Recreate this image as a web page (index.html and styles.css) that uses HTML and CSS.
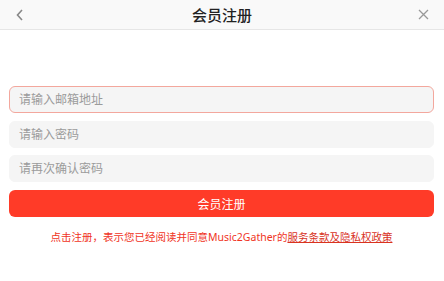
FILE: index.html
```html
<!DOCTYPE html>
<html lang="zh-CN">
<head>
    <meta charset="UTF-8">
    <meta name="viewport" content="width=device-width, initial-scale=1.0">
    <title>会员注册</title>
    <link rel="stylesheet" href="styles.css">
</head>
<body>
    <div class="header">
        <span class="back">
            <svg width="8" height="12" viewBox="0 0 8 12"><path d="M6 1L1.5 6 6 11" fill="none" stroke="#888" stroke-width="1.6"/></svg>
        </span>
        <h1>会员注册</h1>
        <span class="close">
            <svg width="11" height="11" viewBox="0 0 11 11"><path d="M1 1L10 10M10 1L1 10" fill="none" stroke="#999" stroke-width="1.3"/></svg>
        </span>
    </div>
    <div class="form">
        <input class="inp active" type="text" placeholder="请输入邮箱地址">
        <input class="inp" type="password" placeholder="请输入密码">
        <input class="inp" type="password" placeholder="请再次确认密码">
        <button class="btn">会员注册</button>
        <p class="agree">点击注册，表示您已经阅读并同意Music2Gather的<a href="#">服务条款及隐私权政策</a></p>
    </div>
</body>
</html>
```

FILE: styles.css
```css
html,
body,
h1,
p {
    margin: 0;
    padding: 0;
}
body {
    background-color: #fff;
    font-family: "Noto Sans", "Noto Sans CJK SC", sans-serif;
}
.header {
    height: 29px;
    border-bottom: 1px solid #e6e6e6;
    background-color: #f9f9f9;
    display: flex;
    align-items: center;
    justify-content: space-between;
    padding: 0 14px 0 14px;
}
.header h1 {
    font-size: 15px;
    font-weight: 500;
    color: #222;
}
.back,
.close {
    width: 12px;
    display: flex;
    justify-content: center;
}
.form {
    padding: 56px 10px 0 9px;
    display: flex;
    flex-direction: column;
}
.inp {
    height: 27px;
    box-sizing: border-box;
    border: 1px solid #f5f5f5;
    border-radius: 6px;
    background-color: #f5f5f5;
    padding: 0 9px;
    font-family: "Noto Sans", "Noto Sans CJK SC", sans-serif;
    font-size: 12px;
    outline: none;
    margin-bottom: 7px;
}
.inp::placeholder {
    color: #9b9b9b;
}
.inp.active {
    border-color: #f3a79d;
    margin-bottom: 8px;
}
.btn {
    margin-top: 1px;
    height: 27px;
    border: none;
    border-radius: 6px;
    background-color: #ff3b28;
    color: #fff;
    font-family: "Noto Sans", "Noto Sans CJK SC", sans-serif;
    font-size: 12px;
}
.agree {
    margin-top: 12px;
    text-align: center;
    font-size: 10.5px;
    color: #f0341e;
}
.agree a {
    color: #d9331f;
    text-decoration: underline;
}
```
